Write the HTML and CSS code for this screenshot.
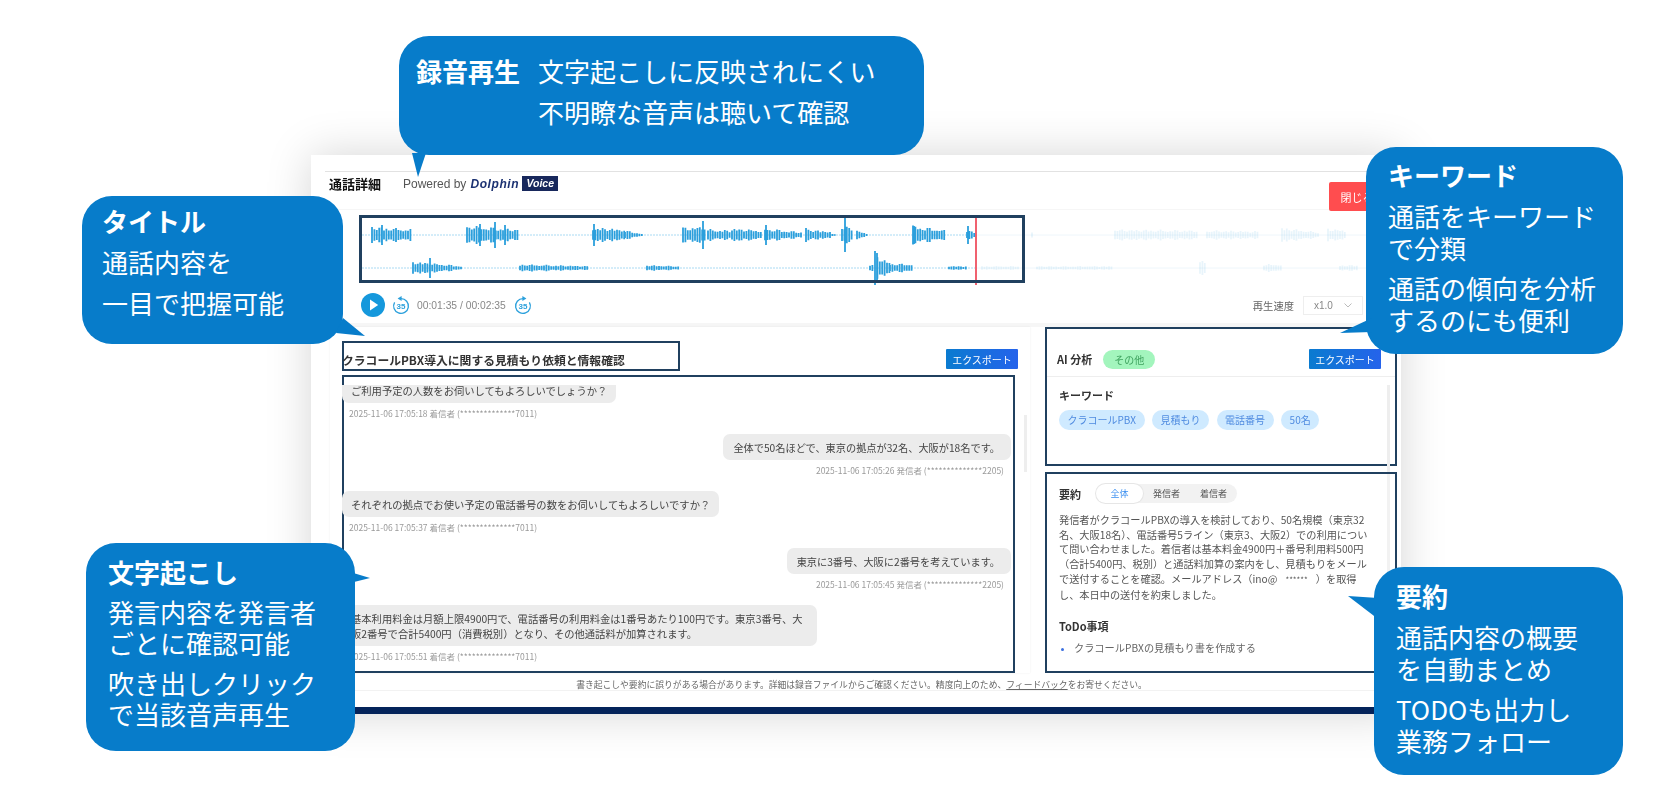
FILE: index.html
```html
<!DOCTYPE html>
<html lang="ja">

<head>
    <meta charset="UTF-8">
    <title>通話詳細</title>
    <link rel="stylesheet" href="styles.css">
</head>

<body>
    <div class="card">
        <div class="head">
            <span class="headTitle">通話詳細</span>
            <span class="powered">Powered by</span>
            <span class="dolphin">Dolphin</span>
            <span class="voice">Voice</span>
            <button class="closeBtn">閉じる</button>
        </div>

        <div class="player">
            <svg id="wave" class="wave" width="1090" height="80" viewBox="311 0 1090 80"></svg>
            <div class="waveFrame"></div>
            <div class="controls">
                <svg class="playBtn" width="24" height="24" viewBox="0 0 24 24">
                    <circle cx="12" cy="12" r="12" fill="#1598dc" />
                    <path d="M9 6.5v11l8.2-5.5z" fill="#fff" />
                </svg>
                <svg class="skip" width="20" height="20" viewBox="0 0 20 20">
                    <path d="M10 3.6a7.4 7.4 0 1 1-6.4 3.7" />
                    <path class="arrow" d="M10.6 1v5l-4-2.5z" />
                    <text x="10" y="13.6">35</text>
                </svg>
                <span class="time">00:01:35 / 00:02:35</span>
                <svg class="skip" width="20" height="20" viewBox="0 0 20 20">
                    <path d="M10 3.6a7.4 7.4 0 1 0 6.4 3.7" />
                    <path class="arrow" d="M9.4 1v5l4-2.5z" />
                    <text x="10" y="13.6">35</text>
                </svg>
                <span class="speedLabel">再生速度</span>
                <div class="speed">
                    <span>x1.0</span>
                    <svg width="8" height="5" viewBox="0 0 8 5">
                        <path d="M.5 .5L4 4l3.5-3.5" fill="none" stroke="#bbb" />
                    </svg>
                </div>
            </div>
        </div>

        <div class="panels">
            <div class="leftPanel">
                <div class="leftHead">
                    <h2 class="callTitle">クラコールPBX導入に関する見積もり依頼と情報確認</h2>
                    <button class="exportBtn">エクスポート</button>
                </div>
                <div class="transcript">
                    <div class="scroller">
                        <div class="msgs">
                            <div class="msg">
                                <div class="bubble">ご利用予定の人数をお伺いしてもよろしいでしょうか？</div>
                                <div class="meta">2025-11-06 17:05:18 着信者 (**************7011)</div>
                            </div>
                            <div class="msg mine">
                                <div class="bubble">全体で50名ほどで、東京の拠点が32名、大阪が18名です。</div>
                                <div class="meta">2025-11-06 17:05:26 発信者 (**************2205)</div>
                            </div>
                            <div class="msg">
                                <div class="bubble">それぞれの拠点でお使い予定の電話番号の数をお伺いしてもよろしいですか？</div>
                                <div class="meta">2025-11-06 17:05:37 着信者 (**************7011)</div>
                            </div>
                            <div class="msg mine">
                                <div class="bubble">東京に3番号、大阪に2番号を考えています。</div>
                                <div class="meta">2025-11-06 17:05:45 発信者 (**************2205)</div>
                            </div>
                            <div class="msg">
                                <div class="bubble longBubble">基本利用料金は月額上限4900円で、電話番号の利用料金は1番号あたり100円です。東京3番号、大<br>阪2番号で合計5400円（消費税別）となり、その他通話料が加算されます。</div>
                                <div class="meta">2025-11-06 17:05:51 着信者 (**************7011)</div>
                            </div>
                        </div>
                    </div>
                </div>
                <div class="scrollThumb"></div>
            </div>

            <div class="rightPanel">
                <div class="aiBox">
                    <div class="aiHead">
                        <h3>AI 分析</h3>
                        <span class="tagGreen">その他</span>
                        <button class="exportBtn">エクスポート</button>
                    </div>
                    <div class="aiBody">
                        <h3>キーワード</h3>
                        <div class="tags">
                            <span>クラコールPBX</span>
                            <span>見積もり</span>
                            <span>電話番号</span>
                            <span>50名</span>
                        </div>
                    </div>
                </div>
                <div class="summaryBox">
                    <div class="summaryBody">
                        <div class="summaryHead">
                            <h3>要約</h3>
                            <div class="segment">
                                <span class="active">全体</span>
                                <span>発信者</span>
                                <span>着信者</span>
                            </div>
                        </div>
                        <p class="summaryText">発信者がクラコールPBXの導入を検討しており、50名規模（東京32名、大阪18名）、電話番号5ライン（東京3、大阪2）での利用について問い合わせました。着信者は基本料金4900円＋番号利用料500円（合計5400円、税別）と通話料加算の案内をし、見積もりをメールで送付することを確認。メールアドレス（ino@<span class="mask">******</span>）を取得し、本日中の送付を約束しました。</p>
                        <h3 class="todoTitle">ToDo事項</h3>
                        <ul class="todo">
                            <li>クラコールPBXの見積もり書を作成する</li>
                        </ul>
                    </div>
                </div>
            </div>
        </div>

        <div class="foot">書き起こしや要約に誤りがある場合があります。詳細は録音ファイルからご確認ください。精度向上のため、<u>フィードバック</u>をお寄せください。</div>
        <div class="navyBar"></div>
    </div>

    <div class="callout calloutTop">
        <div class="tail tailTop"></div>
        <h4>録音再生</h4>
        <p>文字起こしに反映されにくい<br>不明瞭な音声は聴いて確認</p>
    </div>

    <div class="callout calloutTitle">
        <div class="tail tailTitle"></div>
        <h4>タイトル</h4>
        <p>通話内容を<br>一目で把握可能</p>
    </div>

    <div class="callout calloutText">
        <div class="tail tailText"></div>
        <h4>文字起こし</h4>
        <p>発言内容を発言者<br>ごとに確認可能</p>
        <p>吹き出しクリック<br>で当該音声再生</p>
    </div>

    <div class="callout calloutKeyword">
        <div class="tail tailKeyword"></div>
        <h4>キーワード</h4>
        <p>通話をキーワード<br>で分類</p>
        <p>通話の傾向を分析<br>するのにも便利</p>
    </div>

    <div class="callout calloutSummary">
        <div class="tail tailSummary"></div>
        <h4>要約</h4>
        <p>通話内容の概要<br>を自動まとめ</p>
        <p>TODOも出力し<br>業務フォロー</p>
    </div>

    <script src="wave.js"></script>
</body>

</html>
```

FILE: styles.css
```css
* {
    margin: 0;
    padding: 0;
    box-sizing: border-box;
}

body {
    position: relative;
    height: 790px;
    overflow: hidden;
    padding: 155px 0 0 311px;
    background: white;
    font-family: "Noto Sans CJK JP", sans-serif;
    color: #333;
}

button {
    font-family: inherit;
    border: none;
}

.card {
    display: flex;
    flex-direction: column;
    width: 1090px;
    height: 559px;
    padding-top: 16px;
    background: white;
    box-shadow: 0 0 42px rgba(0, 0, 0, 0.17);
    filter: blur(0.35px);
}

.head {
    display: flex;
    align-items: flex-start;
    height: 39px;
    margin-left: 14px;
    padding: 4px 12px 0 4px;
    border-top: 1px solid #e2e2e2;
    border-bottom: 1px solid #f6f6f6;
}

.headTitle {
    width: 74px;
    font-size: 13px;
    font-weight: bold;
    line-height: 16px;
    color: #111;
}

.powered {
    font-family: "Liberation Sans", sans-serif;
    font-size: 12px;
    line-height: 16px;
    color: #555;
}

.dolphin {
    margin-left: 4px;
    font-family: "Liberation Sans", sans-serif;
    font-size: 12px;
    font-weight: bold;
    font-style: italic;
    line-height: 16px;
    letter-spacing: 0.6px;
    color: #1c3272;
}

.voice {
    width: 36px;
    height: 15px;
    margin: 0 0 0 3px;
    background: #18285c;
    font-family: "Liberation Sans", sans-serif;
    font-size: 10.5px;
    font-weight: bold;
    font-style: italic;
    line-height: 15px;
    text-align: center;
    color: white;
}

.closeBtn {
    width: 60px;
    height: 29px;
    margin: 6px 0 0 auto;
    padding-right: 4px;
    border-radius: 2px;
    background: #ff4d4f;
    font-size: 11px;
    color: white;
}

.player {
    position: relative;
    height: 117px;
    border-bottom: 4px solid #f6f6f6;
}

.wave {
    display: block;
}

.waveFrame {
    position: absolute;
    left: 48px;
    top: 5px;
    width: 666px;
    height: 68px;
    border: 3px solid #20405f;
}

.controls {
    display: flex;
    align-items: center;
    height: 30px;
    padding: 0 38px 0 50px;
}

.skip {
    margin-left: 6px;
}

.skip path {
    fill: none;
    stroke: #2ba0dc;
    stroke-width: 1.3;
}

.skip .arrow {
    fill: #2ba0dc;
    stroke: none;
}

.skip text {
    font-family: "Liberation Sans", sans-serif;
    font-size: 8px;
    font-weight: bold;
    text-anchor: middle;
    fill: #2ba0dc;
}

.time {
    margin: 0 1px 0 6px;
    font-family: "Liberation Sans", sans-serif;
    font-size: 10.3px;
    color: #888;
}

.speedLabel {
    margin-left: auto;
    font-size: 10.3px;
    color: #666;
}

.speed {
    display: flex;
    align-items: center;
    justify-content: space-between;
    width: 60px;
    height: 19px;
    margin-left: 9px;
    padding: 0 10px;
    border: 1px solid #eee;
    font-family: "Liberation Sans", sans-serif;
    font-size: 10px;
    color: #888;
}

.panels {
    display: grid;
    grid-template-columns: 700px 352px;
    gap: 15px;
    height: 346px;
    padding-left: 19px;
}

.leftPanel {
    position: relative;
    padding-left: 12px;
    box-shadow: 0 0 2px rgba(0, 0, 0, 0.07);
}

.leftHead {
    display: flex;
    align-items: flex-start;
    height: 48px;
    padding: 14px 12px 0 0;
}

.callTitle {
    width: 338px;
    height: 30px;
    border: 2px solid #20405f;
    font-size: 11.8px;
    font-weight: bold;
    line-height: 34px;
    text-indent: -2px;
    white-space: nowrap;
    color: #333;
}

.exportBtn {
    width: 72px;
    height: 20px;
    margin-left: auto;
    border-radius: 1px;
    background: linear-gradient(90deg, #0a7bd0, #2563eb);
    font-size: 10px;
    color: white;
}

.leftHead .exportBtn {
    margin-top: 8px;
}

.transcript {
    width: 673px;
    height: 298px;
    border: 2px solid #20405f;
}

.scroller {
    height: 280px;
    margin: 8px -2px 0;
    overflow: hidden;
}

.msgs {
    margin-top: -8px;
}

.msg {
    display: flex;
    flex-direction: column;
    align-items: flex-start;
    margin-bottom: 14px;
}

.msg.mine {
    align-items: flex-end;
    padding-right: 4px;
}

.bubble {
    padding: 5.5px 9px;
    border-radius: 7px;
    background: #ececec;
    font-size: 10.3px;
    line-height: 15px;
    color: #444;
}

.longBubble {
    width: 475px;
}

.mine .bubble {
    padding: 5.5px 11px 5.5px 10px;
    font-size: 10.2px;
}

.meta {
    margin: 4px 7px 0;
    font-size: 8.5px;
    line-height: 13px;
    color: #9a9a9a;
}

.scrollThumb {
    position: absolute;
    right: 3px;
    top: 88px;
    width: 3px;
    height: 57px;
    background: #eee;
}

.rightPanel {
    display: flex;
    flex-direction: column;
    gap: 6px;
}

.rightPanel h3 {
    font-size: 11px;
    font-weight: bold;
    line-height: 16px;
    color: #333;
}

.aiBox {
    height: 139px;
    border: 2px solid #20405f;
}

.aiHead {
    display: flex;
    align-items: center;
    height: 48px;
    padding: 13px 14px 0 10px;
    border-bottom: 1px solid #eee;
}

.tagGreen {
    width: 52px;
    height: 19px;
    margin-left: 11px;
    border-radius: 10px;
    background: #a3f5bd;
    font-size: 10px;
    line-height: 19px;
    text-align: center;
    color: #3fa35f;
}

.aiBody {
    height: 88px;
    margin: 8px 5px 0 0;
    padding: 2px 0 0 12px;
    border-right: 3px solid #eee;
}

.tags {
    display: flex;
    gap: 7.5px;
    margin-top: 7px;
}

.tags span {
    height: 20px;
    padding: 0 8.5px;
    border-radius: 10px;
    background: #cfeaff;
    font-size: 10px;
    line-height: 20px;
    color: #4f8be0;
}

.summaryBox {
    height: 201px;
    border: 2px solid #20405f;
}

.summaryBody {
    height: 196px;
    margin-right: 5px;
    padding: 10px 0 0 12px;
    border-right: 3px solid #f2f2f2;
}

.summaryHead {
    display: flex;
    align-items: center;
    height: 19px;
}

.segment {
    display: flex;
    width: 141px;
    height: 19px;
    margin-left: 15px;
    border-radius: 10px;
    background: #f2f2f2;
    font-size: 9px;
    line-height: 19px;
    text-align: center;
    color: #555;
}

.segment span {
    flex: 1;
}

.segment .active {
    border-radius: 10px;
    background: white;
    box-shadow: 0 0 0 1px #e6e6e6;
    color: #3b8ff0;
}

.summaryText {
    width: 316px;
    margin-top: 10px;
    font-size: 10.2px;
    line-height: 14.7px;
    color: #555;
}

.mask {
    padding: 0 8px;
    font-size: 8px;
}

.rightPanel .todoTitle {
    margin-top: 16px;
}

.todo {
    margin-top: 6px;
    padding-left: 15px;
    font-size: 10.2px;
    line-height: 16px;
    color: #666;
}

.todo li::marker {
    color: #3b6fe0;
    font-size: 9px;
}

.foot {
    height: 18px;
    margin-left: 19px;
    padding: 5px 8px 0 0;
    border-bottom: 1px solid #f2f2f2;
    font-size: 8.8px;
    line-height: 13px;
    text-align: center;
    color: #666;
}

.navyBar {
    height: 7px;
    margin-top: auto;
    background: #04235a;
}

/* blue explanation bubbles on top of the screenshot */
.callout {
    position: absolute;
    border-radius: 30px;
    background: #077cca;
    font-size: 26px;
    line-height: 31.5px;
    color: white;
}

.callout h4 {
    font-size: 26px;
    font-weight: bold;
    line-height: 32px;
}

.callout p {
    margin-top: 9px;
}

.tail {
    position: absolute;
    background: #077cca;
}

.calloutTop {
    left: 399px;
    top: 36px;
    display: flex;
    gap: 18px;
    width: 525px;
    height: 119px;
    padding: 14px 0 0 17px;
    line-height: 41px;
}

.calloutTop h4 {
    line-height: 41px;
}

.calloutTop p {
    margin-top: 0;
}

.tailTop {
    left: 13px;
    top: 117px;
    width: 14px;
    height: 24px;
    clip-path: polygon(0 0, 100% 0, 43% 100%);
}

.calloutTitle {
    left: 82px;
    top: 196px;
    width: 261px;
    height: 148px;
    padding: 9px 0 0 20px;
    line-height: 41px;
}

.calloutTitle p {
    margin-top: 4px;
}

.tailTitle {
    left: 252px;
    top: 120px;
    width: 31px;
    height: 21px;
    clip-path: polygon(9px 2px, 31px 20px, 2px 17px);
}

.calloutText {
    left: 86px;
    top: 543px;
    width: 269px;
    height: 208px;
    padding: 13px 0 0 22px;
    line-height: 30.5px;
}

.calloutText p + p {
    margin-top: 10px;
}

.tailText {
    left: 264px;
    top: 27px;
    width: 20px;
    height: 15px;
    clip-path: polygon(0 2px, 20px 8px, 0 13px);
}

.calloutKeyword {
    left: 1366px;
    top: 147px;
    width: 257px;
    height: 207px;
    padding: 12px 0 0 22px;
}

.tailKeyword {
    left: -26px;
    top: 169px;
    width: 32px;
    height: 18px;
    clip-path: polygon(32px 2px, 0 17px, 32px 16px);
}

.calloutSummary {
    left: 1374px;
    top: 567px;
    width: 249px;
    height: 208px;
    padding: 13px 0 0 22px;
}

.tailSummary {
    left: -26px;
    top: 28px;
    width: 30px;
    height: 26px;
    clip-path: polygon(0 1px, 30px 3px, 30px 24px);
}
```

FILE: wave.js
```js
// [from x, to x, start height, end height], x is page px
const rows = [
    {
        y: 25,
        segs: [
            [372, 411, 9, 6], [467, 518, 10, 6], [593, 625, 8, 6], [625, 643, 5, 1],
            [683, 705, 8, 9], [708, 730, 6, 5], [732, 763, 7, 5], [765, 803, 7, 3],
            [806, 830, 6, 4], [830, 837, 1, 1], [842, 852, 9, 8], [857, 868, 5, 1],
            [913, 945, 10, 5], [967, 975, 5, 3]
        ],
        spikes: [[382, 10], [480, 11], [495, 13], [505, 10], [594, 11], [703, 14], [766, 10], [806, 7], [845, 17], [914, 9], [968, 9]],
        faded: [[1032, 1034, 4, 4], [1115, 1197, 6, 5], [1207, 1259, 5, 4], [1282, 1319, 8, 3], [1328, 1347, 7, 5]]
    },
    {
        y: 58,
        segs: [
            [413, 463, 7, 2], [520, 588, 4, 2], [647, 680, 3, 2],
            [870, 873, 3, 5], [875, 890, 14, 6], [890, 913, 5, 4], [949, 966, 2, 2]
        ],
        spikes: [[430, 10], [875, 17], [877, 15]],
        faded: [[982, 1019, 2, 2], [1037, 1112, 2, 2], [1200, 1207, 7, 7], [1264, 1282, 4, 4], [1340, 1358, 3, 3]]
    }
];

const svg = document.getElementById("wave");
let played = "";
let rest = "";

const bar = (x, y, h) => `M${x} ${y - h}V${y + h}`;

const drawSegs = (segs, y) => {
    let d = "";
    segs.forEach(s => {
        for (let x = s[0]; x <= s[1]; x += 2.4) {
            const t = (x - s[0]) / Math.max(s[1] - s[0], 1);
            const wobble = 0.55 + 0.45 * Math.abs(Math.sin(x * 0.9) * Math.cos(x * 0.23));
            d += bar(x, y, (s[2] + (s[3] - s[2]) * t) * wobble);
        }
    });
    return d;
};

rows.forEach(r => {
    played += drawSegs(r.segs, r.y);
    r.spikes.forEach(s => {
        played += bar(s[0], r.y, s[1]);
    });
    rest += drawSegs(r.faded, r.y);
});

svg.innerHTML = `
    <path d="M362 25H976M362 58H976" stroke="#a9daf3" stroke-dasharray="2 1" />
    <path d="M976 25H1375M976 58H1375" stroke="#eef6fb" />
    <path d="${played}" stroke="#2b9fdc" stroke-width="1.8" />
    <path d="${rest}" stroke="#2b9fdc" stroke-width="1.8" opacity="0.1" />
    <rect x="975" y="8" width="2" height="67" fill="#f0616f" />
`;
```
